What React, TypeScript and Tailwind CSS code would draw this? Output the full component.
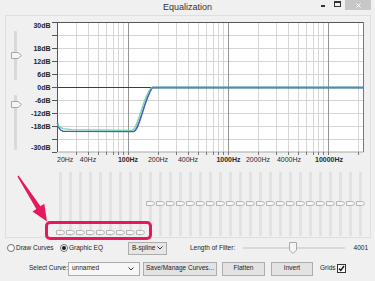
import React from "react";

const FONT = "font-['Liberation_Sans',Arial,sans-serif]";

function xf(f: number) {
  return Math.round(128 + 100 * Math.log10(f / 100)) + 0.5;
}

const gridFreqs = [30, 40, 50, 60, 70, 80, 90, 200, 300, 400, 500, 600, 700, 800, 900, 2000, 3000, 4000, 5000, 6000, 7000, 8000, 9000, 20000];
const decades = [100, 1000, 10000];
const hLines = [35, 48, 61, 74, 100, 113, 126, 139];

const dbLabels: [string, number][] = [
  ["30dB", 25],
  ["18dB", 48],
  ["12dB", 61],
  ["6dB", 74],
  ["0dB", 87],
  ["-6dB", 100],
  ["-12dB", 113],
  ["-18dB", 126],
  ["-30dB", 147],
];

const fLabels: [string, number, boolean][] = [
  ["40Hz", 88, false],
  ["100Hz", 128, true],
  ["200Hz", 158, false],
  ["400Hz", 188, false],
  ["1000Hz", 228.5, true],
  ["2000Hz", 258, false],
  ["4000Hz", 289, false],
  ["10000Hz", 329, true],
];

function Graph() {
  return (
    <svg width={344} height={150} viewBox="25 16 344 150" className="block shrink-0">
      <rect x={57.5} y={22.5} width={306} height={129.5} fill="#ffffff" />
      {hLines.map((y) => (
        <line key={"h" + y} x1={58} x2={363} y1={y + 0.5} y2={y + 0.5} stroke="#d6d6d6" strokeWidth={1} />
      ))}
      {gridFreqs.map((f) => (
        <line key={"v" + f} x1={xf(f)} x2={xf(f)} y1={23} y2={152} stroke="#d6d6d6" strokeWidth={1} />
      ))}
      {decades.map((f) => (
        <line key={"d" + f} x1={xf(f)} x2={xf(f)} y1={23} y2={152} stroke="#959595" strokeWidth={1} />
      ))}
      <line x1={58} x2={363} y1={87.5} y2={87.5} stroke="#3c3c3c" strokeWidth={1} />
      <line x1={57.5} x2={363.5} y1={22.5} y2={22.5} stroke="#555" strokeWidth={1} />
      <line x1={57.5} x2={57.5} y1={22} y2={152} stroke="#555" strokeWidth={1} />
      <line x1={363.5} x2={363.5} y1={22} y2={152} stroke="#777" strokeWidth={1} />
      <line x1={57.5} x2={363.5} y1={152} y2={152} stroke="#aaa" strokeWidth={1} />
      {[22, 35, 48, 61, 74, 87, 100, 113, 126, 139, 152].map((y) => (
        <line key={"t" + y} x1={52} x2={57} y1={y + 0.5} y2={y + 0.5} stroke="#555" strokeWidth={1} />
      ))}
      {[...gridFreqs, ...decades].map((f) => (
        <line key={"b" + f} x1={xf(f)} x2={xf(f)} y1={152} y2={155} stroke="#777" strokeWidth={1} />
      ))}
      <path
        d="M57.5,123 Q58.5,130 63,131.2 L133.5,131.5 C139,131.5 144,100 152,88 L153,87.6 L363,87.6"
        fill="none"
        stroke="#4a5cc4"
        strokeWidth={1.6}
      />
      <path
        d="M57.5,124 Q59,127.5 63,128.6 L72,129.6 L132,130.4 C137.5,130.2 142.5,99 150.5,88.5 L152,87.4 L363,87.4"
        fill="none"
        stroke="#66d49e"
        strokeWidth={1.3}
        strokeOpacity={0.9}
      />
      <line x1={152} x2={363} y1={87.5} y2={87.5} stroke="#3f9a8e" strokeWidth={1.6} />
      {dbLabels.map(([t, y]) => (
        <text key={t} x={50.5} y={y + 2.5} textAnchor="end" fontSize={7} fontWeight="bold" fill="#1e1e1e">
          {t}
        </text>
      ))}
      <text x={57} y={161.5} fontSize={7} fill="#2a2a2a">
        20Hz
      </text>
      {fLabels.map(([t, x, b]) => (
        <text key={t} x={x} y={161.5} textAnchor="middle" fontSize={7} fontWeight={b ? "bold" : "normal"} fill="#2a2a2a">
          {t}
        </text>
      ))}
    </svg>
  );
}

function VThumb() {
  return (
    <svg width={11} height={7} viewBox="0 0 11 7" className="block">
      <path d="M0.5,0.5 H7 L10.5,3.5 L7,6.5 H0.5 Z" fill="#f5f5f5" stroke="#a8a8a8" strokeWidth={1} />
    </svg>
  );
}

function BankThumb() {
  return (
    <svg width={9} height={5} viewBox="0 0 9 5" className="block">
      <path d="M0.5,0.5 H5.5 Q8.5,0.5 8.5,2.5 Q8.5,4.5 5.5,4.5 H0.5 Z" fill="#f6f6f6" stroke="#b4b4b4" strokeWidth={1} />
    </svg>
  );
}

function Chevron() {
  return (
    <svg width={6} height={4} viewBox="0 0 6 4" className="block shrink-0">
      <polyline points="0.5,0.5 3,3 5.5,0.5" fill="none" stroke="#333" strokeWidth={1} />
    </svg>
  );
}

function Radio({ checked }: { checked?: boolean }) {
  return (
    <div className="w-[8px] h-[8px] rounded-full border border-[#6f6f6f] bg-white flex items-center justify-center shrink-0">
      {checked && <div className="w-[4px] h-[4px] rounded-full bg-[#1a1a1a]" />}
    </div>
  );
}

function Button({ w, label }: { w: string; label: string }) {
  return (
    <div className={`${w} h-[14px] bg-[#e3e3e3] border border-[#adadad] flex items-center justify-center text-[6.5px] leading-none text-[#222] shrink-0 whitespace-nowrap`}>
      {label}
    </div>
  );
}

export default function App() {
  const bank = Array.from({ length: 31 }, (_, i) => i);
  return (
    <div className={`relative w-[375px] h-[281px] overflow-hidden bg-[#f0f0f0] ${FONT} flex flex-col whitespace-nowrap`}>
      {/* title bar */}
      <div className="grid grid-cols-[1fr_auto_1fr] h-[15px] shrink-0">
        <div />
        <div className="text-[9px] leading-[15px] text-[#333]">Equalization</div>
        <div className="flex justify-end items-start pr-[4px]">
          <div className="w-[15px] h-[10px] flex items-start justify-center pt-[5px]">
            <div className="w-[4px] h-[2px] bg-[#333]" />
          </div>
          <div className="w-[15px] h-[10px] flex items-start justify-center pt-[1px]">
            <div className="w-[7px] h-[6px] border border-[#333] border-t-2" />
          </div>
          <div className="w-[26px] h-[10px] bg-[#c7c7c7] flex items-center justify-center">
            <svg width={5} height={5} viewBox="0 0 5 5" className="block">
              <path d="M0.5,0.5 L4.5,4.5 M4.5,0.5 L0.5,4.5" stroke="#fff" strokeWidth={1} />
            </svg>
          </div>
        </div>
      </div>

      {/* main panel */}
      <div className="ml-[5px] w-[366px] h-[223px] border border-[#dedede] flex flex-col shrink-0">
        <div className="flex h-[150px]">
          <div className="w-[19px] flex flex-col items-start pl-[8px] shrink-0">
            <div className="relative w-[3px] h-[49px] mt-[15px] bg-[#d9d9d9] rounded-[1px]">
              <div className="absolute left-[-3px] top-[21px]">
                <VThumb />
              </div>
            </div>
            <div className="relative w-[3px] h-[55px] mt-[15px] bg-[#d9d9d9] rounded-[1px]">
              <div className="absolute left-[-3px] top-[6px]">
                <VThumb />
              </div>
            </div>
          </div>
          <Graph />
        </div>
        <div className="flex h-[71px] pl-[49px]">
          {bank.map((i) => (
            <div key={i} className="w-[10px] shrink-0">
              <div className="relative ml-[4px] w-[3px] h-[64px] mt-[6px] bg-[#e2e2e2]">
                <div className={`absolute left-[-3px] ${i < 9 ? "top-[58px]" : "top-[29px]"}`}>
                  <BankThumb />
                </div>
              </div>
            </div>
          ))}
        </div>
      </div>

      {/* row 1 */}
      <div className="flex items-center h-[14px] mt-[3px] text-[6.5px] leading-none text-[#222] shrink-0">
        <div className="w-[7px] shrink-0" />
        <div className="w-[53px] flex items-center gap-[1px] shrink-0">
          <Radio />
          <span>Draw Curves</span>
        </div>
        <div className="w-[68px] flex items-center gap-[1px] shrink-0">
          <Radio checked />
          <span>Graphic EQ</span>
        </div>
        <div className="w-[39px] h-[13px] bg-[#e6e6e6] border border-[#acacac] flex items-center justify-between pl-[3px] pr-[3px] shrink-0">
          <span>B-spline</span>
          <Chevron />
        </div>
        <div className="w-[23px] shrink-0" />
        <div className="w-[50px] shrink-0">Length of Filter:</div>
        <div className="relative w-[108px] h-[14px] flex items-center shrink-0">
          <div className="w-full h-[2px] bg-[#d9d9d9] mx-[3px]" />
          <div className="absolute left-[49px] top-[1px]">
            <svg width={8} height={12} viewBox="0 0 8 12" className="block">
              <path d="M0.5,0.5 H7.5 V8 L4,11.5 L0.5,8 Z" fill="#f5f5f5" stroke="#a8a8a8" strokeWidth={1} />
            </svg>
          </div>
        </div>
        <div className="w-[20px] text-right shrink-0">4001</div>
      </div>

      {/* row 2 */}
      <div className="flex items-center h-[15px] mt-[6px] text-[6.5px] leading-none text-[#222] shrink-0">
        <div className="w-[29px] shrink-0" />
        <div className="w-[39px] shrink-0">Select Curve:</div>
        <div className="w-[72px] h-[14px] bg-[#f7f7f7] border border-[#acacac] flex items-center justify-between pl-[3px] pr-[5px] shrink-0">
          <span>unnamed</span>
          <Chevron />
        </div>
        <div className="w-[3px] shrink-0" />
        <Button w="w-[74px]" label="Save/Manage Curves..." />
        <div className="w-[5px] shrink-0" />
        <Button w="w-[43px]" label="Flatten" />
        <div className="w-[6px] shrink-0" />
        <Button w="w-[42px]" label="Invert" />
        <div className="w-[7px] shrink-0" />
        <span className="w-[17px] shrink-0">Grids</span>
        <div className="w-[9px] h-[9px] border border-[#333] bg-white flex items-center justify-center shrink-0">
          <svg width={7} height={7} viewBox="0 0 7 7" className="block">
            <polyline points="1,3.5 2.8,5.5 6,1" fill="none" stroke="#111" strokeWidth={1.4} />
          </svg>
        </div>
      </div>

      {/* annotation overlay: arrow + highlight box */}
      <svg width={40} height={52} viewBox="12 172 40 52" className="absolute left-[12px] top-[172px] block">
        <polygon points="18.6,175.6 40.5,206.3 44.3,203.8 47,221.5 32.5,211.4 36.3,208.9 17.4,176.4" fill="#e6195c" />
      </svg>
      <div className="absolute left-[45px] top-[221px] w-[107px] h-[19px] border-[3px] border-[#e6195c] rounded-[5px]" />
    </div>
  );
}
